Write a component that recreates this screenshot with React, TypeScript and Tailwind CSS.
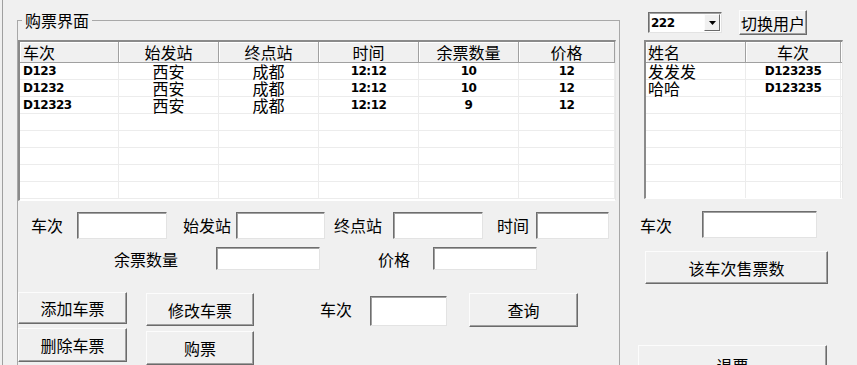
import type { ReactNode } from "react";

const cjk = "font-['Noto_Sans_CJK_SC',sans-serif]";
const num = "font-['DejaVu_Sans',sans-serif] font-bold text-[12px] tracking-[-0.5px]";

function Btn({ className = "", children }: { className?: string; children: ReactNode }) {
  return (
    <button
      type="button"
      className={`flex shrink-0 items-center justify-center border border-t-[#fcfcfc] border-l-[#fcfcfc] border-r-[#6b6b6b] border-b-[#6b6b6b] bg-[#f0f0f0] text-[16px] leading-none text-black shadow-[inset_-1px_-1px_0_#a0a0a0] ${cjk} ${className}`}
    >
      {children}
    </button>
  );
}

function Field({ className = "" }: { className?: string }) {
  return (
    <input
      type="text"
      readOnly
      className={`shrink-0 border border-t-[#6e6e6e] border-l-[#6e6e6e] border-r-[#e3e3e3] border-b-[#e3e3e3] bg-white shadow-[inset_1px_1px_0_#a0a0a0] outline-none ${className}`}
    />
  );
}

function Label({ className = "", children }: { className?: string; children: ReactNode }) {
  return <span className={`shrink-0 text-[16px] leading-[20px] ${cjk} ${className}`}>{children}</span>;
}

type GridProps = {
  className: string;
  cols: string[];
  heads: string[];
  rows: ReactNode[][];
  total: number;
};

// list view: sunken frame, header buttons, light grid lines
function Grid({ className, cols, heads, rows, total }: GridProps) {
  const body = [...rows];
  while (body.length < total) body.push(cols.map(() => null));
  return (
    <div className={`flex shrink-0 flex-col overflow-hidden border-t-2 border-l-2 border-r border-b border-t-[#8a8a8a] border-l-[#8a8a8a] border-r-[#e8e8e8] border-b-white bg-white ${className}`}>
      <div className="flex h-[21px] shrink-0 border-b border-[#a0a0a0] bg-[#f0f0f0]">
        {heads.map((h, i) => (
          <div
            key={i}
            className={`flex h-full shrink-0 items-center border-r border-[#a0a0a0] text-[16px] leading-[20px] shadow-[inset_1px_1px_0_#fff] ${cjk} ${cols[i]}`}
          >
            {h}
          </div>
        ))}
        <div className="h-full flex-1 shadow-[inset_1px_1px_0_#fff]" />
      </div>
      {body.map((r, ri) => (
        <div key={ri} className="flex h-[17px] shrink-0 border-b border-[#ececec]">
          {r.map((c, ci) => (
            <div key={ci} className={`flex h-full shrink-0 items-center border-r border-[#ececec] leading-[17px] ${cols[ci]}`}>
              {c}
            </div>
          ))}
        </div>
      ))}
    </div>
  );
}

const zh = (t: string) => <span className={`text-[16px] leading-[17px] ${cjk}`}>{t}</span>;
const nb = (t: string) => <span className={num}>{t}</span>;

const leftCols = [
  "w-[99px] justify-start pl-[3px]",
  "w-[100px] justify-center",
  "w-[100px] justify-center",
  "w-[100px] justify-center",
  "w-[100px] justify-center",
  "w-[96px] justify-center",
];

const tickets = [
  ["D123", "西安", "成都", "12:12", "10", "12"],
  ["D1232", "西安", "成都", "12:12", "10", "12"],
  ["D12323", "西安", "成都", "12:12", "9", "12"],
];

const rightCols = ["w-[100px] justify-start pl-[2px]", "w-[95px] justify-center"];

const passengers = [
  ["发发发", "D123235"],
  ["哈哈", "D123235"],
];

export default function App() {
  return (
    <div className="flex h-[365px] w-[857px] overflow-hidden bg-[#f0f0f0] text-black">
      <div className="w-[17px] shrink-0">
        <div className="ml-[2px] h-full w-[1px] bg-[#a0a0a0]" />
      </div>

      <div className="relative mt-[20px] h-[400px] w-[603px] shrink-0 border-t border-l border-r border-[#a8a8a8]">
        <span className={`absolute -top-[11px] left-[4px] bg-[#f0f0f0] px-[3px] text-[16px] leading-[20px] ${cjk}`}>购票界面</span>

        <Grid
          className="mt-[19px] h-[161px] w-[598px]"
          cols={leftCols}
          heads={["车次", "始发站", "终点站", "时间", "余票数量", "价格"]}
          rows={tickets.map((t) => [nb(t[0]), zh(t[1]), zh(t[2]), nb(t[3]), nb(t[4]), nb(t[5])])}
          total={8}
        />

        <div className="mt-[10px] flex h-[28px] items-center">
          <Label className="ml-[13px]">车次</Label>
          <Field className="ml-[14px] h-[27px] w-[90px]" />
          <Label className="ml-[16px]">始发站</Label>
          <Field className="ml-[5px] h-[27px] w-[89px]" />
          <Label className="ml-[9px]">终点站</Label>
          <Field className="ml-[11px] h-[27px] w-[90px]" />
          <Label className="ml-[14px]">时间</Label>
          <Field className="ml-[7px] h-[27px] w-[73px]" />
        </div>

        <div className="mt-[8px] flex h-[23px] items-center">
          <Label className="ml-[96px]">余票数量</Label>
          <Field className="ml-[38px] h-[23px] w-[104px]" />
          <Label className="ml-[58px]">价格</Label>
          <Field className="ml-[23px] h-[23px] w-[104px]" />
        </div>

        <div className="mt-[22px] flex items-start">
          <div className="flex flex-col gap-[4px]">
            <Btn className="h-[32px] w-[109px]">添加车票</Btn>
            <Btn className="h-[34px] w-[109px]">删除车票</Btn>
          </div>
          <div className="ml-[19px] mt-[1px] flex flex-col gap-[5px]">
            <Btn className="h-[33px] w-[108px]">修改车票</Btn>
            <Btn className="h-[34px] w-[108px]">购票</Btn>
          </div>
          <Label className="ml-[66px] mt-[7px]">车次</Label>
          <Field className="ml-[18px] mt-[4px] h-[30px] w-[77px]" />
          <Btn className="ml-[22px] mt-[1px] h-[34px] w-[109px]">查询</Btn>
        </div>
      </div>

      <div className="flex w-[237px] shrink-0 flex-col">
        <div className="mt-[10px] flex items-start">
          <div className="ml-[28px] mt-[2px] flex h-[21px] w-[74px] items-center border border-t-[#6e6e6e] border-l-[#6e6e6e] border-r-[#e3e3e3] border-b-[#e3e3e3] bg-white pl-[2px] pr-[1px] shadow-[inset_1px_1px_0_#a0a0a0]">
            <span className={`flex-1 leading-none ${num}`}>222</span>
            <div className="flex h-[17px] w-[16px] items-center justify-center border border-t-[#fcfcfc] border-l-[#fcfcfc] border-r-[#6b6b6b] border-b-[#6b6b6b] bg-[#f0f0f0]">
              <svg width="7" height="4" viewBox="0 0 7 4">
                <path d="M0 0h7L3.5 4z" fill="#000" />
              </svg>
            </div>
          </div>
          <Btn className="ml-[17px] h-[25px] w-[68px]">切换用户</Btn>
        </div>

        <Grid
          className="ml-[24px] mt-[5px] h-[159px] w-[199px]"
          cols={rightCols}
          heads={["姓名", "车次"]}
          rows={passengers.map((p) => [zh(p[0]), nb(p[1])])}
          total={8}
        />

        <div className="mt-[12px] flex h-[27px] items-center">
          <Label className="ml-[20px]">车次</Label>
          <Field className="ml-[30px] h-[27px] w-[115px]" />
        </div>

        <Btn className="ml-[25px] mt-[13px] h-[33px] w-[183px]">该车次售票数</Btn>
        <Btn className="ml-[18px] mt-[61px] h-[40px] w-[189px]">退票</Btn>
      </div>
    </div>
  );
}
